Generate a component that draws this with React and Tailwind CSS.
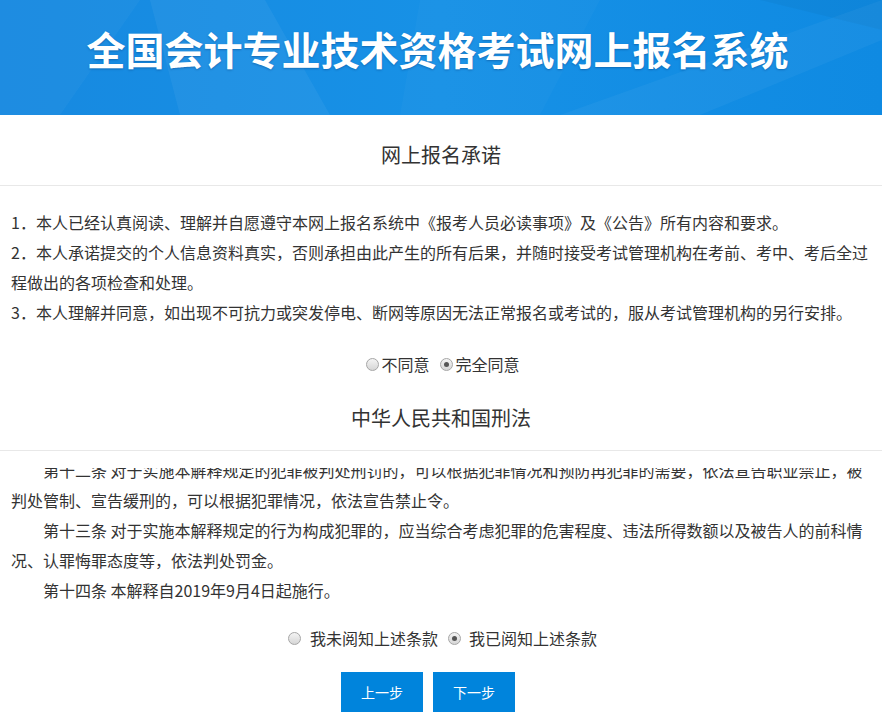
import React from "react";

const FONT = { fontFamily: '"Noto Sans CJK SC", "Microsoft YaHei", sans-serif' };

function Radio({ checked }) {
  return (
    <span className="inline-flex items-center justify-center w-[13px] h-[13px] rounded-full border border-[#a6a6a6] bg-gradient-to-b from-[#f4f4f4] to-[#d6d6d6] shrink-0">
      {checked && <span className="w-[5px] h-[5px] rounded-full bg-[#555]" />}
    </span>
  );
}

function Header() {
  return (
    <div className="relative h-[115px] bg-[#148be2] overflow-hidden">
      <svg className="absolute inset-0 w-full h-full" viewBox="0 0 882 115" preserveAspectRatio="none">
        <defs>
          <linearGradient id="bg" x1="0" y1="0" x2="1" y2="0">
            <stop offset="0" stopColor="#1789e0" />
            <stop offset="0.5" stopColor="#1791e6" />
            <stop offset="1" stopColor="#0f8ae2" />
          </linearGradient>
        </defs>
        <rect width="882" height="115" fill="url(#bg)" />
        <polygon points="0,0 140,0 60,115 0,115" fill="#ffffff" opacity="0.03" />
        <polygon points="150,0 265,0 330,115 180,115" fill="#ffffff" opacity="0.05" />
        <polygon points="420,0 600,0 540,115 400,115" fill="#ffffff" opacity="0.025" />
        <polygon points="560,115 882,0 882,40 700,115" fill="#ffffff" opacity="0.04" />
        <polygon points="760,0 882,0 882,30" fill="#000000" opacity="0.03" />
      </svg>
      <div className="relative flex justify-center pt-[28px] pr-[7px]">
        <h1 className="text-white font-bold text-[39px] leading-[40px] [text-shadow:0_1px_2px_rgba(0,40,100,0.35)]">
          全国会计专业技术资格考试网上报名系统
        </h1>
      </div>
    </div>
  );
}

export default function App() {
  return (
    <div className="w-[882px] bg-white text-[#333]" style={FONT}>
      <Header />
      <div className="pt-[25px] pb-[15px] text-center text-[20px] leading-[30px] border-b border-[#e8e8e8]">
        网上报名承诺
      </div>
      <div className="px-[11px] pt-[21px] text-[16px] leading-[30px]">
        <p>1．本人已经认真阅读、理解并自愿遵守本网上报名系统中《报考人员必读事项》及《公告》所有内容和要求。</p>
        <p>2．本人承诺提交的个人信息资料真实，否则承担由此产生的所有后果，并随时接受考试管理机构在考前、考中、考后全过程做出的各项检查和处理。</p>
        <p>3．本人理解并同意，如出现不可抗力或突发停电、断网等原因无法正常报名或考试的，服从考试管理机构的另行安排。</p>
      </div>
      <div className="mt-[25px] pl-[4px] flex items-center justify-center text-[16px] leading-[24px]">
        <Radio />
        <span className="ml-[2px] mr-[10px]">不同意</span>
        <Radio checked />
        <span className="ml-[3px]">完全同意</span>
      </div>
      <div className="mt-[27px] pb-[17px] text-center text-[20px] leading-[30px] border-b border-[#e8e8e8]">
        中华人民共和国刑法
      </div>
      <div className="mt-[17px] h-[137px] overflow-hidden px-[11px] text-[16px] leading-[30px]">
        <div className="-mt-[13px]">
          <p className="indent-[32px]">第十二条 对于实施本解释规定的犯罪被判处刑罚的，可以根据犯罪情况和预防再犯罪的需要，依法宣告职业禁止，被判处管制、宣告缓刑的，可以根据犯罪情况，依法宣告禁止令。</p>
          <p className="indent-[32px]">第十三条 对于实施本解释规定的行为构成犯罪的，应当综合考虑犯罪的危害程度、违法所得数额以及被告人的前科情况、认罪悔罪态度等，依法判处罚金。</p>
          <p className="indent-[32px]">第十四条 本解释自2019年9月4日起施行。</p>
        </div>
      </div>
      <div className="mt-[21px] pl-[3px] flex items-center justify-center text-[16px] leading-[24px]">
        <Radio />
        <span className="ml-[9px] mr-[10px]">我未阅知上述条款</span>
        <Radio checked />
        <span className="ml-[8px]">我已阅知上述条款</span>
      </div>
      <div className="mt-[22px] pb-[11px] pr-[26px] flex justify-center gap-[10px]">
        <button className="w-[82px] h-[40px] bg-[#0084dc] text-white text-[14px]">上一步</button>
        <button className="w-[82px] h-[40px] bg-[#0084dc] text-white text-[14px]">下一步</button>
      </div>
    </div>
  );
}
